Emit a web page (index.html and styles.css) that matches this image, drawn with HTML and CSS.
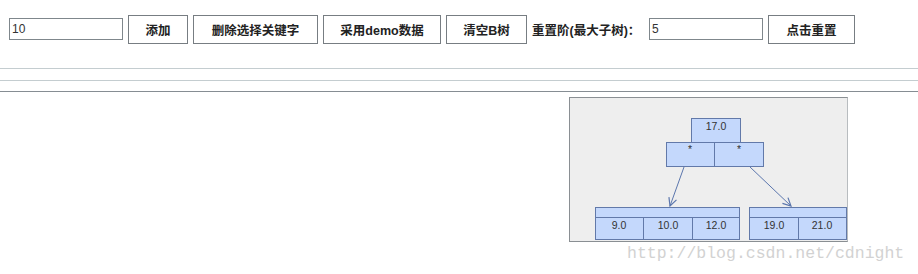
FILE: index.html
```html
<!DOCTYPE html>
<html lang="zh">
<head>
    <meta charset="UTF-8">
    <title>B树演示</title>
    <link rel="stylesheet" href="styles.css">
</head>
<body>
    <!-- 工具栏 -->
    <div class="toolbar">
        <input type="text" class="field" value="10">
        <button class="btn add">添加</button>
        <button class="btn remove">删除选择关键字</button>
        <button class="btn demo">采用demo数据</button>
        <button class="btn clear">清空B树</button>
        <span class="label">重置阶(最大子树)：</span>
        <input type="text" class="field" value="5">
        <button class="btn reset">点击重置</button>
    </div>

    <div class="rule light first"></div>
    <div class="rule light second"></div>
    <div class="rule dark"></div>

    <!-- 树的画布 -->
    <div class="stage">
        <div class="panel">
            <svg width="277" height="143" viewBox="0 0 277 143">
                <defs>
                    <marker id="arrow" markerWidth="10" markerHeight="10" refX="9" refY="5" orient="auto" markerUnits="userSpaceOnUse">
                        <path d="M1,1 L9,5 L1,9" fill="none" stroke="#5b76ad" stroke-width="1.2"/>
                    </marker>
                </defs>

                <g class="node">
                    <rect x="121.5" y="20.5" width="49" height="24"/>
                    <rect x="96.5" y="44.5" width="48" height="24"/>
                    <rect x="144.5" y="44.5" width="49" height="24"/>
                </g>
                <text class="key" x="146" y="32">17.0</text>
                <text class="key" x="120" y="55">*</text>
                <text class="key" x="169" y="55">*</text>

                <line class="edge" x1="114" y1="69" x2="100" y2="108" marker-end="url(#arrow)"/>
                <line class="edge" x1="180" y1="69" x2="221" y2="108" marker-end="url(#arrow)"/>

                <g class="node">
                    <rect x="25.5" y="109.5" width="144" height="10"/>
                    <rect x="25.5" y="119.5" width="48" height="22"/>
                    <rect x="73.5" y="119.5" width="49" height="22"/>
                    <rect x="122.5" y="119.5" width="47" height="22"/>

                    <rect x="179.5" y="109.5" width="97" height="10"/>
                    <rect x="179.5" y="119.5" width="49" height="22"/>
                    <rect x="228.5" y="119.5" width="48" height="22"/>
                </g>
                <text class="key" x="49" y="131">9.0</text>
                <text class="key" x="98" y="131">10.0</text>
                <text class="key" x="146" y="131">12.0</text>
                <text class="key" x="204" y="131">19.0</text>
                <text class="key" x="252" y="131">21.0</text>
            </svg>
        </div>
        <div class="watermark">http://blog.csdn.net/cdnight</div>
    </div>
</body>
</html>
```

FILE: styles.css
```css
body {
    margin: 0;
    font-family: "Liberation Sans", "Noto Sans CJK SC", sans-serif;
    background-color: #ffffff;
}

.toolbar {
    display: flex;
    align-items: center;
    gap: 5px;
    padding: 15px 0 0 9px;
    height: 28px;
}

.field {
    box-sizing: border-box;
    width: 114px;
    height: 22px;
    margin: 0;
    padding: 0 2px;
    border: 1px solid #7f878c;
    font-family: "Liberation Sans", sans-serif;
    font-size: 12px;
    color: #333;
    outline: none;
}

.btn {
    box-sizing: border-box;
    height: 29px;
    margin: 0;
    padding: 0;
    background-color: #ffffff;
    border: 1px solid #777d82;
    font-family: "Liberation Sans", "Noto Sans CJK SC", sans-serif;
    font-size: 12.5px;
    font-weight: bold;
    color: #222;
}

.add { width: 60px; }
.remove { width: 125px; }
.demo { width: 118px; }
.clear { width: 81px; }
.reset { width: 87px; }

.label {
    width: 112px;
    font-size: 12.5px;
    font-weight: bold;
    color: #222;
    white-space: nowrap;
}

.rule {
    height: 1px;
}

.light {
    background-color: #c4cdd0;
}

.first {
    margin-top: 25px;
}

.second {
    margin-top: 11px;
}

.dark {
    margin-top: 10px;
    background-color: #868d93;
}

.stage {
    padding: 5px 0 0 569px;
}

.panel {
    box-sizing: border-box;
    width: 279px;
    height: 145px;
    border: 1px solid #8a8f93;
    border-right-color: #b8bcbf;
    background-color: #eeeeee;
}

.panel svg {
    display: block;
}

.node rect {
    fill: #c4d8fc;
    stroke: #6279a9;
    stroke-width: 1;
}

.edge {
    stroke: #5b76ad;
    stroke-width: 1;
}

.key {
    font-family: "Liberation Sans", sans-serif;
    font-size: 10.5px;
    fill: #333;
    text-anchor: middle;
}

.watermark {
    margin: 2px 0 0 58px;
    font-family: "Liberation Mono", monospace;
    font-size: 16.5px;
    line-height: 20px;
    color: #d2d2d2;
    white-space: nowrap;
}
```
